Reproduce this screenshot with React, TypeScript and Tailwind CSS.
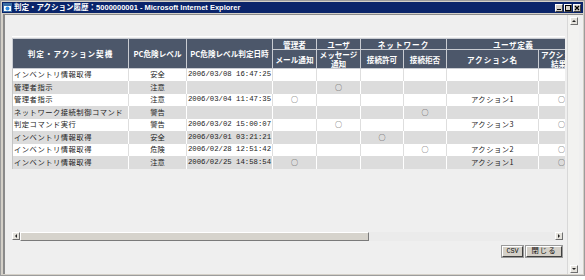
const jp = "font-['Noto_Sans_CJK_JP',sans-serif]";
const mono = "font-['Liberation_Mono',monospace]";

type Row = {
    trigger: string;
    level: string;
    date: string;
    mail?: boolean;
    msg?: boolean;
    allow?: boolean;
    deny?: boolean;
    action?: string;
    result?: boolean;
};

const rows: Row[] = [
    { trigger: "インベントリ情報取得", level: "安全", date: "2006/03/08 16:47:25" },
    { trigger: "管理者指示", level: "注意", date: "", msg: true },
    { trigger: "管理者指示", level: "注意", date: "2006/03/04 11:47:35", mail: true, action: "アクション1", result: true },
    { trigger: "ネットワーク接続制御コマンド", level: "警告", date: "", deny: true },
    { trigger: "判定コマンド実行", level: "警告", date: "2006/03/02 15:00:07", msg: true, action: "アクション3", result: true },
    { trigger: "インベントリ情報取得", level: "安全", date: "2006/03/01 03:21:21", allow: true },
    { trigger: "インベントリ情報取得", level: "危険", date: "2006/02/28 12:51:42", deny: true, action: "アクション2", result: true },
    { trigger: "インベントリ情報取得", level: "注意", date: "2006/02/25 14:58:54", mail: true, action: "アクション1", result: true },
];

const Mark = ({ on }: { on?: boolean }) =>
    on ? <span className="text-[7px] leading-none text-[#333]">○</span> : null;

const ArrowBtn = ({ dir }: { dir: "up" | "down" | "left" | "right" }) => {
    const pts = {
        up: "2,5 4,3 6,5",
        down: "2,3 4,5 6,3",
        left: "5,2 3,4 5,6",
        right: "3,2 5,4 3,6",
    }[dir];
    return (
        <div className="w-[8px] h-[8px] bg-[#e4e2dc] border border-t-white border-l-white border-r-[#707070] border-b-[#707070] flex items-center justify-center">
            <svg width="8" height="8" viewBox="0 0 8 8" className="shrink-0">
                <polygon points={pts} fill="#222" />
            </svg>
        </div>
    );
};

const App = () => {
    const th = "border border-[#c9ccd2] text-white font-bold text-[7.6px] leading-[9px] text-center align-middle p-0";
    return (
        <div className={`w-[585px] h-[280px] bg-white overflow-hidden ${jp}`}>
            <div className="h-[276px] border border-[#9c9c9c] bg-[#d4d0c8] flex flex-col px-[1px] pt-[1px]">
                {/* title bar */}
                <div className="h-[11px] bg-[#0a246a] flex items-center pl-[1px] pr-[2px]">
                    <svg width="9" height="9" viewBox="0 0 9 9" className="shrink-0">
                        <rect x="0.5" y="0.5" width="8" height="8" fill="#fff" stroke="#3a6ea5" />
                        <rect x="1" y="1" width="7" height="2" fill="#3a6ea5" />
                        <circle cx="4.5" cy="5.5" r="2" fill="#2d8be0" />
                    </svg>
                    <span className="ml-[2px] text-white font-bold text-[7.5px] leading-none font-['Liberation_Sans','Noto_Sans_CJK_JP',sans-serif] whitespace-nowrap">
                        判定・アクション履歴：5000000001 - Microsoft Internet Explorer
                    </span>
                    <div className="ml-auto flex gap-[1px]">
                        {["min", "max", "close"].map((b) => (
                            <div key={b} className="w-[8px] h-[8px] bg-[#d4d0c8] border border-t-white border-l-white border-r-[#404040] border-b-[#404040] flex items-center justify-center">
                                <svg width="6" height="6" viewBox="0 0 6 6">
                                    {b === "min" && <rect x="1" y="4" width="4" height="1" fill="#000" />}
                                    {b === "max" && <rect x="0.5" y="0.5" width="5" height="5" fill="none" stroke="#000" />}
                                    {b === "close" && <path d="M1 1 L5 5 M5 1 L1 5" stroke="#000" strokeWidth="1.2" />}
                                </svg>
                            </div>
                        ))}
                    </div>
                </div>

                {/* client area */}
                <div className="flex-1 mt-[1px] ml-[1px] flex border-l-2 border-t border-[#8a8a8a] bg-[#efefef] mb-[1px]">
                    <div className="w-[562px] flex flex-col pl-[7px] pt-[21px]">
                        <div className="w-[553px] overflow-hidden border-t border-white pt-[1px]">
                            <table className="table-fixed border-collapse w-[580px]">
                                <colgroup>
                                    <col className="w-[116px]" />
                                    <col className="w-[58px]" />
                                    <col className="w-[86px]" />
                                    <col className="w-[44px]" />
                                    <col className="w-[44px]" />
                                    <col className="w-[43px]" />
                                    <col className="w-[43px]" />
                                    <col className="w-[92px]" />
                                    <col className="w-[54px]" />
                                </colgroup>
                                <thead className="bg-[#4c576a]">
                                    <tr className="h-[11px]">
                                        <th rowSpan={2} className={`${th} tracking-[1px]`}>判定・アクション契機</th>
                                        <th rowSpan={2} className={th}>PC危険レベル</th>
                                        <th rowSpan={2} className={`${th} whitespace-nowrap`}>PC危険レベル判定日時</th>
                                        <th className={th}>管理者</th>
                                        <th className={th}>ユーザ</th>
                                        <th colSpan={2} className={`${th} tracking-[1px]`}>ネットワーク</th>
                                        <th colSpan={2} className={`${th} text-left pl-[46px] tracking-[0.5px]`}>ユーザ定義</th>
                                    </tr>
                                    <tr className="h-[19px]">
                                        <th className={`${th} whitespace-nowrap`}>メール通知</th>
                                        <th className={th}>メッセージ<br />通知</th>
                                        <th className={th}>接続許可</th>
                                        <th className={th}>接続拒否</th>
                                        <th className={`${th} tracking-[1px]`}>アクション名</th>
                                        <th className={`${th} text-left pl-[2px] whitespace-nowrap`}>アクション<br /><span className="pl-[10px]">結果</span></th>
                                    </tr>
                                </thead>
                                <tbody>
                                    {rows.map((r, i) => {
                                        const odd = i % 2 === 1;
                                        const td = `h-[12.5px] p-0 border-r ${odd ? "border-white" : "border-[#dedede]"} text-[7.3px] leading-none text-[#222] text-center align-middle`;
                                        return (
                                            <tr key={i} className={odd ? "bg-[#dcdcdc]" : "bg-white"}>
                                                <td className={`${td} text-left pl-[1px] tracking-[0.5px] whitespace-nowrap border-l border-l-[#c4c4c4]`}>{r.trigger}</td>
                                                <td className={td}>{r.level}</td>
                                                <td className={`${td} ${mono} text-[6.6px] whitespace-nowrap`}>{r.date}</td>
                                                <td className={td}><Mark on={r.mail} /></td>
                                                <td className={td}><Mark on={r.msg} /></td>
                                                <td className={td}><Mark on={r.allow} /></td>
                                                <td className={td}><Mark on={r.deny} /></td>
                                                <td className={`${td} tracking-[0.5px]`}>{r.action}</td>
                                                <td className={`${td} text-left pl-[19px]`}><Mark on={r.result} /></td>
                                            </tr>
                                        );
                                    })}
                                </tbody>
                            </table>
                        </div>

                        {/* horizontal scrollbar */}
                        <div className="mt-[63px] w-[553px] h-[9px] flex items-center">
                            <ArrowBtn dir="left" />
                            <div className="w-[349px] h-[9px] bg-[#d6d3cc] border border-t-white border-l-white border-r-[#7a7a7a] border-b-[#7a7a7a]" />
                            <div className="flex-1 h-[9px] bg-[#ebebeb]" />
                            <ArrowBtn dir="right" />
                            <div className="w-[2px]" />
                        </div>

                        {/* buttons */}
                        <div className="mt-[5px] w-[553px] flex justify-end gap-[3px] pr-[3px]">
                            <button className={`w-[21px] h-[11px] bg-[#d4d0c8] border border-t-white border-l-white border-r-[#404040] border-b-[#404040] outline outline-1 outline-[#9a9a9a] text-[6.8px] leading-none text-[#111] ${mono} flex items-center justify-center`}>
                                CSV
                            </button>
                            <button className="w-[36px] h-[11px] bg-[#d4d0c8] border border-t-white border-l-white border-r-[#404040] border-b-[#404040] outline outline-1 outline-[#9a9a9a] text-[7.3px] leading-none text-[#111] tracking-[1px] flex items-center justify-center">
                                閉じる
                            </button>
                        </div>
                    </div>

                    {/* vertical scrollbar */}
                    <div className="w-[12px] flex flex-col items-center pt-[2px] pb-[1px] border-l border-[#d8d8d8] bg-[#f2f2f0]">
                        <ArrowBtn dir="up" />
                        <div className="flex-1" />
                        <ArrowBtn dir="down" />
                    </div>
                </div>
            </div>
        </div>
    );
};

export default App;
